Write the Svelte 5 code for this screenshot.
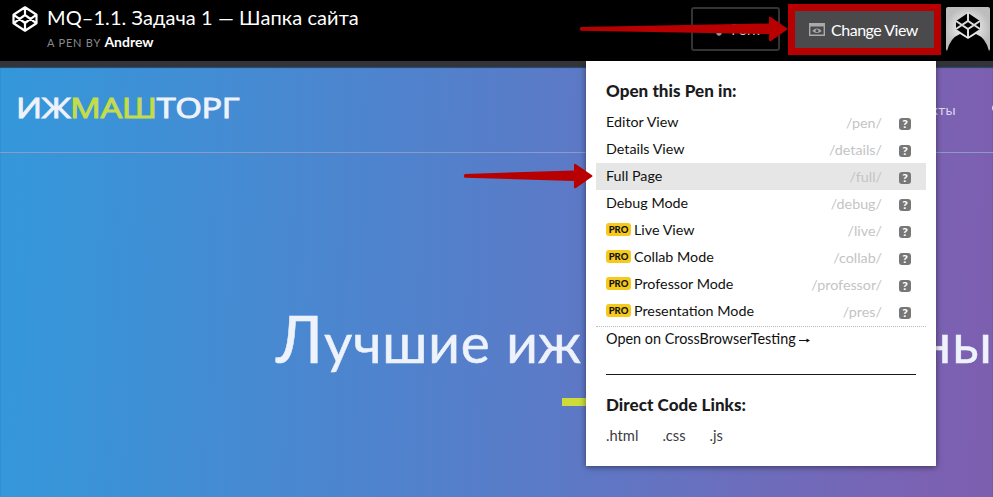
<script>
  const views = [
    { name: 'Editor View', path: '/pen/' },
    { name: 'Details View', path: '/details/' },
    { name: 'Full Page', path: '/full/', active: true },
    { name: 'Debug Mode', path: '/debug/' },
    { name: 'Live View', path: '/live/', pro: true },
    { name: 'Collab Mode', path: '/collab/', pro: true },
    { name: 'Professor Mode', path: '/professor/', pro: true },
    { name: 'Presentation Mode', path: '/pres/', pro: true }
  ];
  const links = ['.html', '.css', '.js'];
</script>

{#snippet arrow(cls, w)}
  <svg class="arrow {cls}" width={w} height="26" viewBox="0 0 {w} 26">
    <path d="M2 11 L{w - 19} 7.5 V2 Q{w - 19} 0 {w - 17} 1.2 L{w - 1} 12.2 Q{w} 13 {w - 1} 13.8 L{w - 17} 25 Q{w - 19} 26 {w - 19} 24 V18 L2 14.8 Q-.5 13 2 11Z" fill="#b80000" />
  </svg>
{/snippet}

<div class="screen">
  <header class="bar">
    <svg class="logo" width="26" height="26" viewBox="0 0 26 26" fill="none" stroke="#fff" stroke-width="2.2" stroke-linejoin="round">
      <path d="M13 1.3 24.5 8.7V17.3L13 24.7 1.5 17.3V8.7ZM13 1.3V9M13 17V24.7M1.5 8.7 13 17 24.5 8.7M1.5 17.3 13 9 24.5 17.3" />
    </svg>
    <div class="titles">
      <h1>MQ–1.1. Задача 1 — Шапка сайта</h1>
      <p>A PEN BY <b>Andrew</b></p>
    </div>
    <div class="actions">
      <button class="fork">
        <svg width="14" height="16" viewBox="0 0 14 16" fill="#999" stroke="#999"><circle cx="3" cy="4.5" r="1" /><circle cx="10" cy="7" r="1.5" /><circle cx="8" cy="11" r="2.3" /><path d="M3 5 8 11 10 7" fill="none" stroke-width="2" /></svg>
        Fork
      </button>
      <button class="change">
        <svg width="16" height="13" viewBox="0 0 16 13" fill="none" stroke="#aaa"><path d="M.7 .7H15.3V12.3H.7Z" stroke-width="1.4" /><path d="M1 2H15" stroke-width="3" /><path d="M3.2 8Q8 3.2 12.8 8 8 12 3.2 8Z" fill="#aaa" stroke="none" /><circle cx="8" cy="7.8" r="1.5" fill="#4a4a4c" stroke="none" /></svg>
        Change View
      </button>
      <svg class="avatar" width="44" height="44" viewBox="0 0 44 44">
        <defs>
          <radialGradient id="glow"><stop offset="0" stop-color="#fff" /><stop offset="1" stop-color="#bdbdbd" /></radialGradient>
        </defs>
        <rect width="44" height="44" rx="2" fill="url(#glow)" />
        <path d="M1 44Q4 31 14 27L22 32 30 27Q40 31 43 44Z" fill="#000" />
        <path d="M22 6 34 14V22L22 30 10 22V14Z" fill="#000" />
        <path d="M22 5V14M22 22V30M10 14 22 22 34 14M10 22 22 14 34 22" fill="none" stroke="#ddd" stroke-width="2" />
      </svg>
    </div>
  </header>

  <main class="page">
    <div class="top">
      <div class="brand"><span>ИЖ</span><span class="lime">МАШ</span><span>ТОРГ</span></div>
      <nav><span>кты</span><svg width="12" height="14" viewBox="0 0 12 14"><circle cx="6" cy="5" r="4" fill="none" stroke="#e4ddf3" stroke-width="2" /></svg></nav>
    </div>
    <div class="hero">
      <h2><span class="w1"><span class="cap">Л</span>учшие</span><span class="w2">иж</span><span class="w3">ны</span></h2>
      <i class="dash"></i>
    </div>
  </main>

  <section class="menu">
    <h3>Open this Pen in:</h3>
    <ul>
      {#each views as v}
        <li class:active={v.active}>
          {#if v.pro}<span class="pro">PRO</span>{/if}
          <span class="name" class:after={v.pro}>{v.name}</span>
          <span class="path">{v.path}</span>
          <span class="help">?</span>
        </li>
      {/each}
    </ul>
    <div class="cross">Open on CrossBrowserTesting <svg width="11" height="7" viewBox="0 0 11 7"><path d="M0 3.5H9" stroke="#111" /><path d="M7.5 1.5 11 3.5 7.5 5.5Z" fill="#111" /></svg></div>
    <hr />
    <h3 class="direct">Direct Code Links:</h3>
    <div class="links">{#each links as l}<span>{l}</span>{/each}</div>
  </section>

  {@render arrow('to-button', 209)}
  {@render arrow('to-row', 130)}
</div>

<style>
  :global(body) { margin: 0; }
  .screen { position: relative; width: 993px; height: 497px; overflow: hidden; display: flex; flex-direction: column; font-family: Lato, "Open Sans", sans-serif; background: #000; }
  h1, h2, h3, p, ul { margin: 0; padding: 0; font-weight: 400; }
  .bar { height: 61px; box-sizing: border-box; display: flex; align-items: flex-start; padding: 0 3px 0 12px; background: #000; color: #fff; border: 0; }
  .logo { margin-top: 6px; }
  .titles { margin: 6px 0 0 9px; }
  h1 { font-size: 20px; line-height: 23px; letter-spacing: .08px; white-space: nowrap; }
  p { font-size: 11px; line-height: 16px; margin-top: 5px; color: #8a8a8d; letter-spacing: .8px; white-space: nowrap; }
  b { color: #fff; font-size: 14px; font-weight: 700; letter-spacing: 0; }
  .actions { margin-left: auto; display: flex; align-items: flex-start; }
  button { font-family: inherit; color: #fff; display: flex; align-items: center; justify-content: center; padding: 0; box-sizing: border-box; white-space: nowrap; }
  .fork { width: 89px; height: 44px; margin: 7px 8px 0 0; padding-top: 1px; border: 2px solid #343436; border-radius: 3px; background: #000; color: #ccc; font-size: 14.5px; gap: 6px; }
  .change { width: 153px; height: 51px; margin: 4px 5px 0 0; padding: 0 2px 1px 0; border: 7px solid #b80000; background: #4a4a4c; font-size: 16px; letter-spacing: -.5px; gap: 6px; }
  .avatar { margin-top: 7px; }
  .page { flex: 1; border-top: 6px solid #343438; background: linear-gradient(92deg, #3498db 0%, #5b7ac7 56%, #7b62b3 93%, #7d5eaf 100%); box-shadow: inset 0 1px 1px #204773; color: #eef2fa; }
  .top { height: 85px; border-bottom: 1px solid #8b9bc9; display: flex; align-items: center; justify-content: space-between; }
  .brand { margin: -5px 0 0 16px; font: 400 28px/30px "Open Sans", sans-serif; -webkit-text-stroke: 1px; display: flex; letter-spacing: -.35px; transform: scaleX(1.225); transform-origin: left; }
  .lime { color: #c3dc4c; }
  nav { display: flex; align-items: center; gap: 35px; margin-right: -10px; font: 14px Lato, sans-serif; letter-spacing: .3px; color: #ddd6ef; }
  h2 { display: flex; align-items: baseline; height: 96px; line-height: 96px; padding: 140px 0 3px 276px; font-size: 55px; white-space: nowrap; font-family: Lato, sans-serif; letter-spacing: 1px; color: #edf2fb; -webkit-text-stroke: .5px; }
  .cap { display: inline-block; width: 48px; font-size: 65px; line-height: 90px; }
  .w1 { width: 235px; letter-spacing: .8px; }
  .w2 { width: 423px; letter-spacing: 0; }
  .dash { display: block; width: 130px; height: 8px; margin: 6px 0 0 562px; background: #cddc39; }
  .menu { position: absolute; left: 586px; top: 61px; width: 350px; height: 405px; box-sizing: border-box; padding: 19px 10px 0; background: #fff; color: #111; box-shadow: 0 1px 6px rgba(0, 0, 0, .5); }
  h3 { font-size: 17px; line-height: 22px; font-weight: 900; padding-left: 10px; color: #1b1b1d; white-space: nowrap; letter-spacing: .05px; }
  ul { list-style: none; margin-top: 7px; padding-bottom: 1px; border-bottom: 1px dotted #bbb; }
  li { height: 27px; display: flex; align-items: center; padding: 0 15px 0 10px; font-size: 14.3px; line-height: 20px; white-space: nowrap; }
  .active { background: #e6e6e6; }
  .name { position: relative; top: -1px; }
  .after { margin-left: 3px; }
  .pro { width: 25px; height: 13px; border-radius: 3px; background: #f5ca1d; font-size: 9.5px; line-height: 13px; font-weight: 900; text-align: center; margin-top: -2px; }
  .path { margin-left: auto; color: #c4c4c4; }
  .help { width: 12px; height: 12px; margin: 3px 0 0 17px; border-radius: 3px; background: #777; color: #fff; font-size: 12px; line-height: 12px; font-weight: 900; text-align: center; }
  .cross { font-size: 14.4px; line-height: 24px; padding-left: 10px; white-space: nowrap; }
  hr { border: 0; height: 1px; background: #1b1b1d; margin: 23px 10px 19px; }
  .links { display: flex; gap: 24px; padding: 9px 0 0 10px; font-size: 14.7px; line-height: 20px; color: #3c3c3f; }
  .arrow { position: absolute; }
  .to-button { left: 579px; top: 16px; }
  .to-row { left: 463px; top: 163px; }
</style>
